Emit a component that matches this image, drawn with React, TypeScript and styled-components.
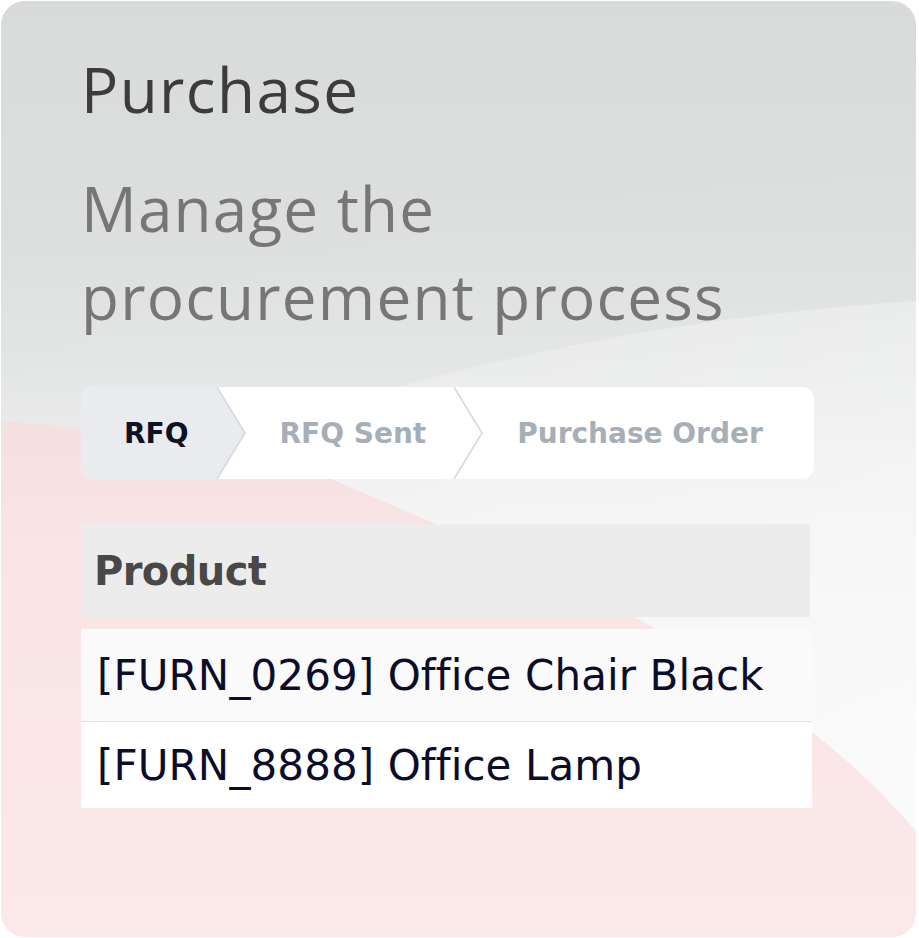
import React from "react";
import styled, { createGlobalStyle } from "styled-components";

const GlobalStyle = createGlobalStyle`
  html, body { margin: 0; padding: 0; background: #ffffff; }
  body { font-family: "DejaVu Sans", sans-serif; }
  * { box-sizing: border-box; }
`;

const Page = styled.div`
  width: 919px;
  height: 938px;
  padding: 1px 3px 1px 1px;
  background: #ffffff;
`;

const Card = styled.div`
  position: relative;
  width: 915px;
  height: 936px;
  border-radius: 24px;
  overflow: hidden;
  padding: 44px 0 0 80px;
  display: flex;
  flex-direction: column;
`;

const Backdrop = styled.svg`
  position: absolute;
  inset: 0;
  width: 100%;
  height: 100%;
  z-index: 0;
`;

const Content = styled.div`
  position: relative;
  z-index: 1;
  display: flex;
  flex-direction: column;
`;

const Title = styled.h1`
  margin: 0;
  font-family: "Open Sans", sans-serif;
  font-weight: 400;
  font-size: 62px;
  line-height: 88px;
  color: #3c3c3c;
  letter-spacing: 1.4px;
`;

const Subtitle = styled.h2`
  margin: 31px 0 0 0;
  font-family: "Open Sans", sans-serif;
  font-weight: 400;
  font-size: 62px;
  line-height: 88px;
  color: #767676;
  letter-spacing: 1.2px;
`;

const Stepper = styled.div`
  margin-top: 47px;
  width: 733px;
  height: 92px;
  display: flex;
  background: #ffffff;
  border-radius: 12px;
  overflow: hidden;
`;

const Step = styled.div<{ $active?: boolean; $first?: boolean; $last?: boolean }>`
  position: relative;
  display: flex;
  align-items: center;
  height: 100%;
  padding-left: ${(p) => (p.$first ? "43px" : "63px")};
  padding-right: ${(p) => (p.$last ? "46px" : "28px")};
  background: ${(p) => (p.$active ? "#e9ebef" : "transparent")};
  font-family: "DejaVu Sans", sans-serif;
  font-weight: 700;
  font-size: 28px;
  color: ${(p) => (p.$active ? "#0f1226" : "#a6aeb8")};
  white-space: nowrap;
  z-index: ${(p) => (p.$active ? 2 : 1)};
`;

const Chevron = styled.svg`
  position: absolute;
  top: 0;
  left: 100%;
  width: 30px;
  height: 92px;
  overflow: visible;
`;

const Table = styled.div`
  margin-top: 45px;
  width: 731px;
  display: flex;
  flex-direction: column;
`;

const HeaderCell = styled.div`
  width: 729px;
  height: 93px;
  display: flex;
  align-items: center;
  padding-left: 13px;
  background: #ececec;
  font-family: "DejaVu Sans", sans-serif;
  font-weight: 700;
  font-size: 40px;
  letter-spacing: -0.6px;
  color: #484848;
`;

const Row = styled.div<{ $alt?: boolean; $h: number }>`
  height: ${(p) => p.$h}px;
  display: flex;
  align-items: center;
  padding-left: 16px;
  background: ${(p) => (p.$alt ? "#fafafa" : "#ffffff")};
  border-bottom: ${(p) => (p.$alt ? "1px solid #dfe3e8" : "none")};
  font-family: "DejaVu Sans", sans-serif;
  font-size: 42px;
  letter-spacing: 0.1px;
  color: #0c0d2b;
  white-space: nowrap;
`;

const Rows = styled.div`
  margin-top: 12px;
  display: flex;
  flex-direction: column;
`;

function ChevronMark({ active }: { active?: boolean }) {
  return (
    <Chevron viewBox="0 0 30 92">
      {active && <polygon points="0,0 28,46 0,92" fill="#e9ebef" />}
      <polyline points="0,0 28,46 0,92" fill="none" stroke="#d5d9df" strokeWidth="1.6" />
    </Chevron>
  );
}

export default function App() {
  return (
    <>
      <GlobalStyle />
      <Page>
        <Card>
          <Backdrop viewBox="0 0 915 936" preserveAspectRatio="none">
            <defs>
              <linearGradient id="bg" x1="0" y1="0" x2="0" y2="1">
                <stop offset="0" stopColor="#d9dbda" />
                <stop offset="0.25" stopColor="#dddfde" />
                <stop offset="0.4" stopColor="#e4e5e5" />
                <stop offset="0.55" stopColor="#efefef" />
                <stop offset="1" stopColor="#f7f7f7" />
              </linearGradient>
              <linearGradient id="glow" x1="0" y1="0" x2="0.6" y2="1">
                <stop offset="0" stopColor="#ffffff" stopOpacity="0.05" />
                <stop offset="0.5" stopColor="#ffffff" stopOpacity="0.6" />
                <stop offset="1" stopColor="#ffffff" stopOpacity="1" />
              </linearGradient>
              <linearGradient id="pink" x1="0" y1="0" x2="0" y2="1">
                <stop offset="0" stopColor="#f4e0e0" />
                <stop offset="0.25" stopColor="#f9e5e5" />
                <stop offset="1" stopColor="#fbe8e8" />
              </linearGradient>
            </defs>
            <rect x="0" y="0" width="915" height="936" fill="url(#bg)" />
            <path d="M0,380 C260,240 560,190 915,175 L915,936 L0,936 Z" fill="#ffffff" opacity="0.05" />
            <path d="M0,540 C260,400 600,320 915,300 L915,936 L0,936 Z" fill="url(#glow)" opacity="0.6" />
            <path
              d="M0,420 C140,432 260,448 330,478 C520,560 760,650 915,830 L915,936 L0,936 Z"
              fill="url(#pink)"
            />
          </Backdrop>
          <Content>
            <Title>Purchase</Title>
            <Subtitle>
              Manage the
              <br />
              procurement process
            </Subtitle>
            <Stepper>
              <Step $active $first>
                RFQ
                <ChevronMark active />
              </Step>
              <Step>
                RFQ Sent
                <ChevronMark />
              </Step>
              <Step $last>Purchase Order</Step>
            </Stepper>
            <Table>
              <HeaderCell>Product</HeaderCell>
              <Rows>
                <Row $alt $h={93}>[FURN_0269] Office Chair Black</Row>
                <Row $h={86}>[FURN_8888] Office Lamp</Row>
              </Rows>
            </Table>
          </Content>
        </Card>
      </Page>
    </>
  );
}
